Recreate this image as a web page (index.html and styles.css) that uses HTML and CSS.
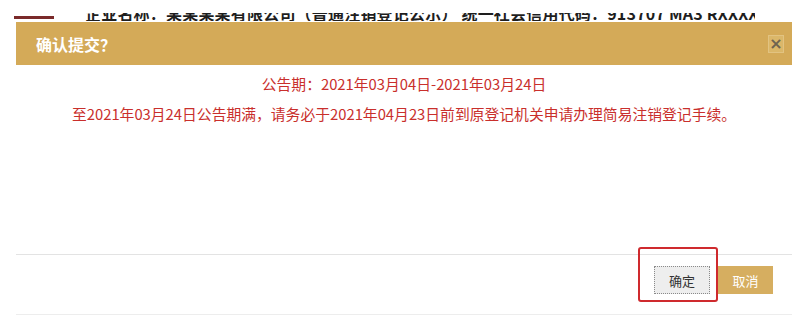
FILE: index.html
```html
<!DOCTYPE html>
<html lang="zh-CN">
<head>
<meta charset="utf-8">
<title>确认提交</title>
<link rel="stylesheet" href="styles.css">
</head>
<body>
<div class="bg-strip">
  <span class="bg-mark"></span>
  <div class="bg-clip">
    <span class="bg-text">企业名称：某某某某有限公司（普通注销登记公示）&nbsp;统一社会信用代码：913707 MA3 RXXXX8089</span>
  </div>
</div>
<div class="modal">
  <div class="modal-header">
    <span class="modal-title">确认提交？</span>
    <button class="modal-close" type="button">×</button>
  </div>
  <div class="modal-body">
    <p class="notice">公告期：2021年03月04日-2021年03月24日</p>
    <p class="notice">至2021年03月24日公告期满，请务必于2021年04月23日前到原登记机关申请办理简易注销登记手续。</p>
  </div>
  <div class="modal-footer">
    <div class="ok-wrap">
      <button class="btn btn-ok" type="button">确定</button>
      <span class="highlight"></span>
    </div>
    <button class="btn btn-cancel" type="button">取消</button>
  </div>
</div>
</body>
</html>
```
FILE: styles.css
```css
html, body {
  margin: 0;
  padding: 0;
  background: #ffffff;
  font-family: "Noto Sans CJK SC", "Microsoft YaHei", "Noto Sans", sans-serif;
}
body {
  width: 801px;
  height: 316px;
  overflow: hidden;
}
.bg-strip {
  height: 22px;
  box-sizing: border-box;
  display: flex;
  align-items: flex-start;
  padding: 13px 0 0 14px;
  gap: 31px;
}
.bg-mark {
  width: 40px;
  height: 3px;
  background: #7a2a2a;
  margin-top: 3px;
  flex: none;
}
.bg-clip {
  height: 8px;
  overflow: hidden;
  width: 670px;
  flex: none;
}
.bg-text {
  display: block;
  font-size: 16px;
  font-weight: bold;
  color: #1e1e1e;
  white-space: nowrap;
  line-height: 17px;
  margin-top: -8px;
  letter-spacing: 0.2px;
}
.modal {
  margin: 0 9px 0 16px;
  position: relative;
  background: #fff;
}
.modal-header {
  height: 43px;
  background: #d4aa58;
  display: flex;
  align-items: center;
  justify-content: space-between;
  padding: 0 8px 0 20px;
}
.modal-title {
  color: #fff;
  font-size: 16px;
  font-weight: bold;
}
.modal-close {
  width: 16px;
  height: 18px;
  padding: 0;
  border: 1px solid #e2c381;
  background: #dbb769;
  color: #6e6350;
  font-size: 16px;
  font-weight: bold;
  line-height: 14px;
  font-family: "DejaVu Sans", sans-serif;
}
.modal-body {
  height: 185px;
  padding-top: 4px;
  text-align: center;
  border-bottom: 1px solid #e3e3e3;
}
.notice {
  margin: 0;
  line-height: 30px;
  font-size: 14.8px;
  color: #c92f2c;
}
.modal-footer {
  height: 60px;
  display: flex;
  justify-content: flex-end;
  align-items: flex-start;
  padding: 11px 19px 0 0;
  box-sizing: border-box;
  gap: 8px;
  border-bottom: 1px solid #ededed;
}
.ok-wrap {
  position: relative;
}
.btn {
  width: 56px;
  height: 28px;
  font-size: 13px;
  font-family: "Noto Sans CJK SC", sans-serif;
  padding: 0;
  display: block;
}
.btn-ok {
  background: #eeeeee;
  border: 1px dotted #8a8a8a;
  color: #333;
}
.btn-cancel {
  background: #d6ae60;
  border: 1px solid #d6ae60;
  color: #fff;
  width: 55px;
}
.highlight {
  position: absolute;
  left: -16px;
  top: -19px;
  width: 80px;
  height: 55px;
  border: 2px solid #cf2a2e;
  border-radius: 3px;
  box-sizing: border-box;
}
```
